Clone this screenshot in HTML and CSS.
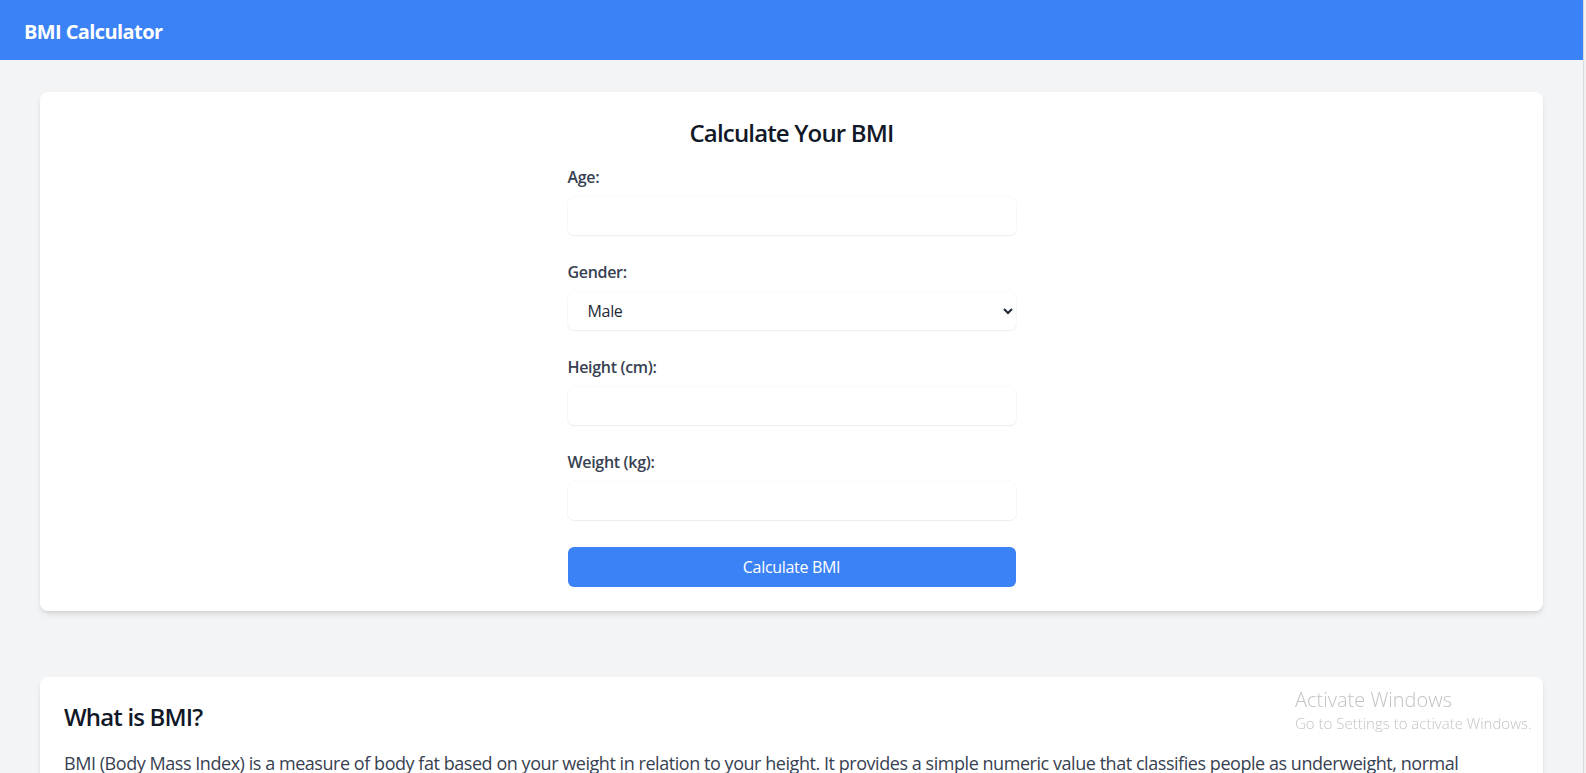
FILE: index.html
```html
<!DOCTYPE html>
<html lang="en">
<head>
<meta charset="utf-8">
<title>BMI Calculator</title>
<link rel="stylesheet" href="styles.css">
</head>
<body>
<div class="viewport">
  <div class="page">
    <header class="topbar">
      <h1 class="brand">BMI Calculator</h1>
    </header>
    <main class="content">
      <section class="card calc-card">
        <h2 class="calc-title">Calculate Your BMI</h2>
        <form class="form">
          <div class="field">
            <label class="label" for="age">Age:</label>
            <input id="age" class="control" type="number">
          </div>
          <div class="field">
            <label class="label" for="gender">Gender:</label>
            <select id="gender" class="control select">
              <option>Male</option>
              <option>Female</option>
            </select>
          </div>
          <div class="field">
            <label class="label" for="height">Height (cm):</label>
            <input id="height" class="control" type="number">
          </div>
          <div class="field field-last">
            <label class="label" for="weight">Weight (kg):</label>
            <input id="weight" class="control" type="number">
          </div>
          <button type="button" class="btn">Calculate BMI</button>
        </form>
      </section>
      <section class="card info-card">
        <h2 class="info-title">What is BMI?</h2>
        <p class="info-text">BMI (Body Mass Index) is a measure of body fat based on your weight in relation to your height. It provides a simple numeric value that classifies people as underweight, normal weight, overweight, or obese.</p>
      </section>
    </main>
  </div>
  <div class="scrollbar"></div>
</div>
<div class="watermark">
  <div class="wm-title">Activate Windows</div>
  <div class="wm-sub">Go to Settings to activate Windows.</div>
</div>
</body>
</html>
```
FILE: styles.css
```css
html {
  overflow: hidden;
}

body {
  margin: 0;
  font-family: "Open Sans", "Noto Sans", sans-serif;
  background: #f3f4f6;
  color: #111827;
}

.viewport {
  display: flex;
  min-height: 100vh;
}

.page {
  flex: 1;
  min-width: 0;
}

.scrollbar {
  width: 2px;
  background: #f0f0f0;
  border-left: 1px solid #dadada;
}

.topbar {
  height: 60px;
  box-sizing: border-box;
  background: #3b82f6;
  display: flex;
  align-items: center;
  padding: 4px 24px 0;
}

.brand {
  margin: 0;
  color: #ffffff;
  font-size: 20px;
  line-height: 28px;
  font-weight: 700;
  letter-spacing: -0.03em;
}

.content {
  padding: 32px 40px;
}

.card {
  background: #ffffff;
  border-radius: 8px;
  box-shadow: 0 4px 6px -1px rgba(0, 0, 0, 0.1), 0 2px 4px -2px rgba(0, 0, 0, 0.1);
  padding: 24px;
}

.calc-card {
  margin-bottom: 66px;
}

.calc-title {
  margin: 1px 0 16px;
  text-align: center;
  font-size: 24px;
  line-height: 32px;
  font-weight: 600;
  letter-spacing: -0.035em;
  color: #111827;
}

.form {
  width: 448px;
  margin: 0 auto;
}

.field {
  margin-bottom: 25px;
}

.field-last {
  margin-bottom: 0;
}

.label {
  display: block;
  margin-bottom: 8px;
  font-size: 16px;
  line-height: 24px;
  font-weight: 600;
  letter-spacing: -0.02em;
  color: #374151;
}

.control {
  display: block;
  box-sizing: border-box;
  width: 100%;
  height: 38px;
  border: 0;
  border-radius: 6px;
  background: #ffffff;
  box-shadow: 0 1px 2px 0 rgba(0, 0, 0, 0.06), 0 0 0 1px rgba(0, 0, 0, 0.02);
  padding: 0 8px;
  font-family: inherit;
  font-size: 16px;
  letter-spacing: -0.02em;
  color: #1f2937;
  outline: none;
}

.select {
  padding: 0 8px 0 16px;
}

.btn {
  display: block;
  width: 100%;
  height: 40px;
  margin-top: 27px;
  border: 0;
  border-radius: 6px;
  background: #3b82f6;
  color: #ffffff;
  font-family: inherit;
  font-size: 16px;
  letter-spacing: -0.02em;
}

.info-title {
  margin: 0 0 16px;
  font-size: 24px;
  line-height: 32px;
  font-weight: 600;
  letter-spacing: -0.035em;
  color: #111827;
}

.info-text {
  margin: 0;
  font-size: 18px;
  line-height: 28px;
  letter-spacing: -0.025em;
  color: #374151;
}

.watermark {
  position: fixed;
  left: 1295px;
  top: 687px;
  color: #c3c3c3;
  font-family: "Open Sans", "Noto Sans", sans-serif;
  font-weight: 300;
  pointer-events: none;
}

.wm-title {
  font-size: 20px;
  line-height: 26px;
}

.wm-sub {
  font-size: 15px;
  line-height: 20px;
}
```
